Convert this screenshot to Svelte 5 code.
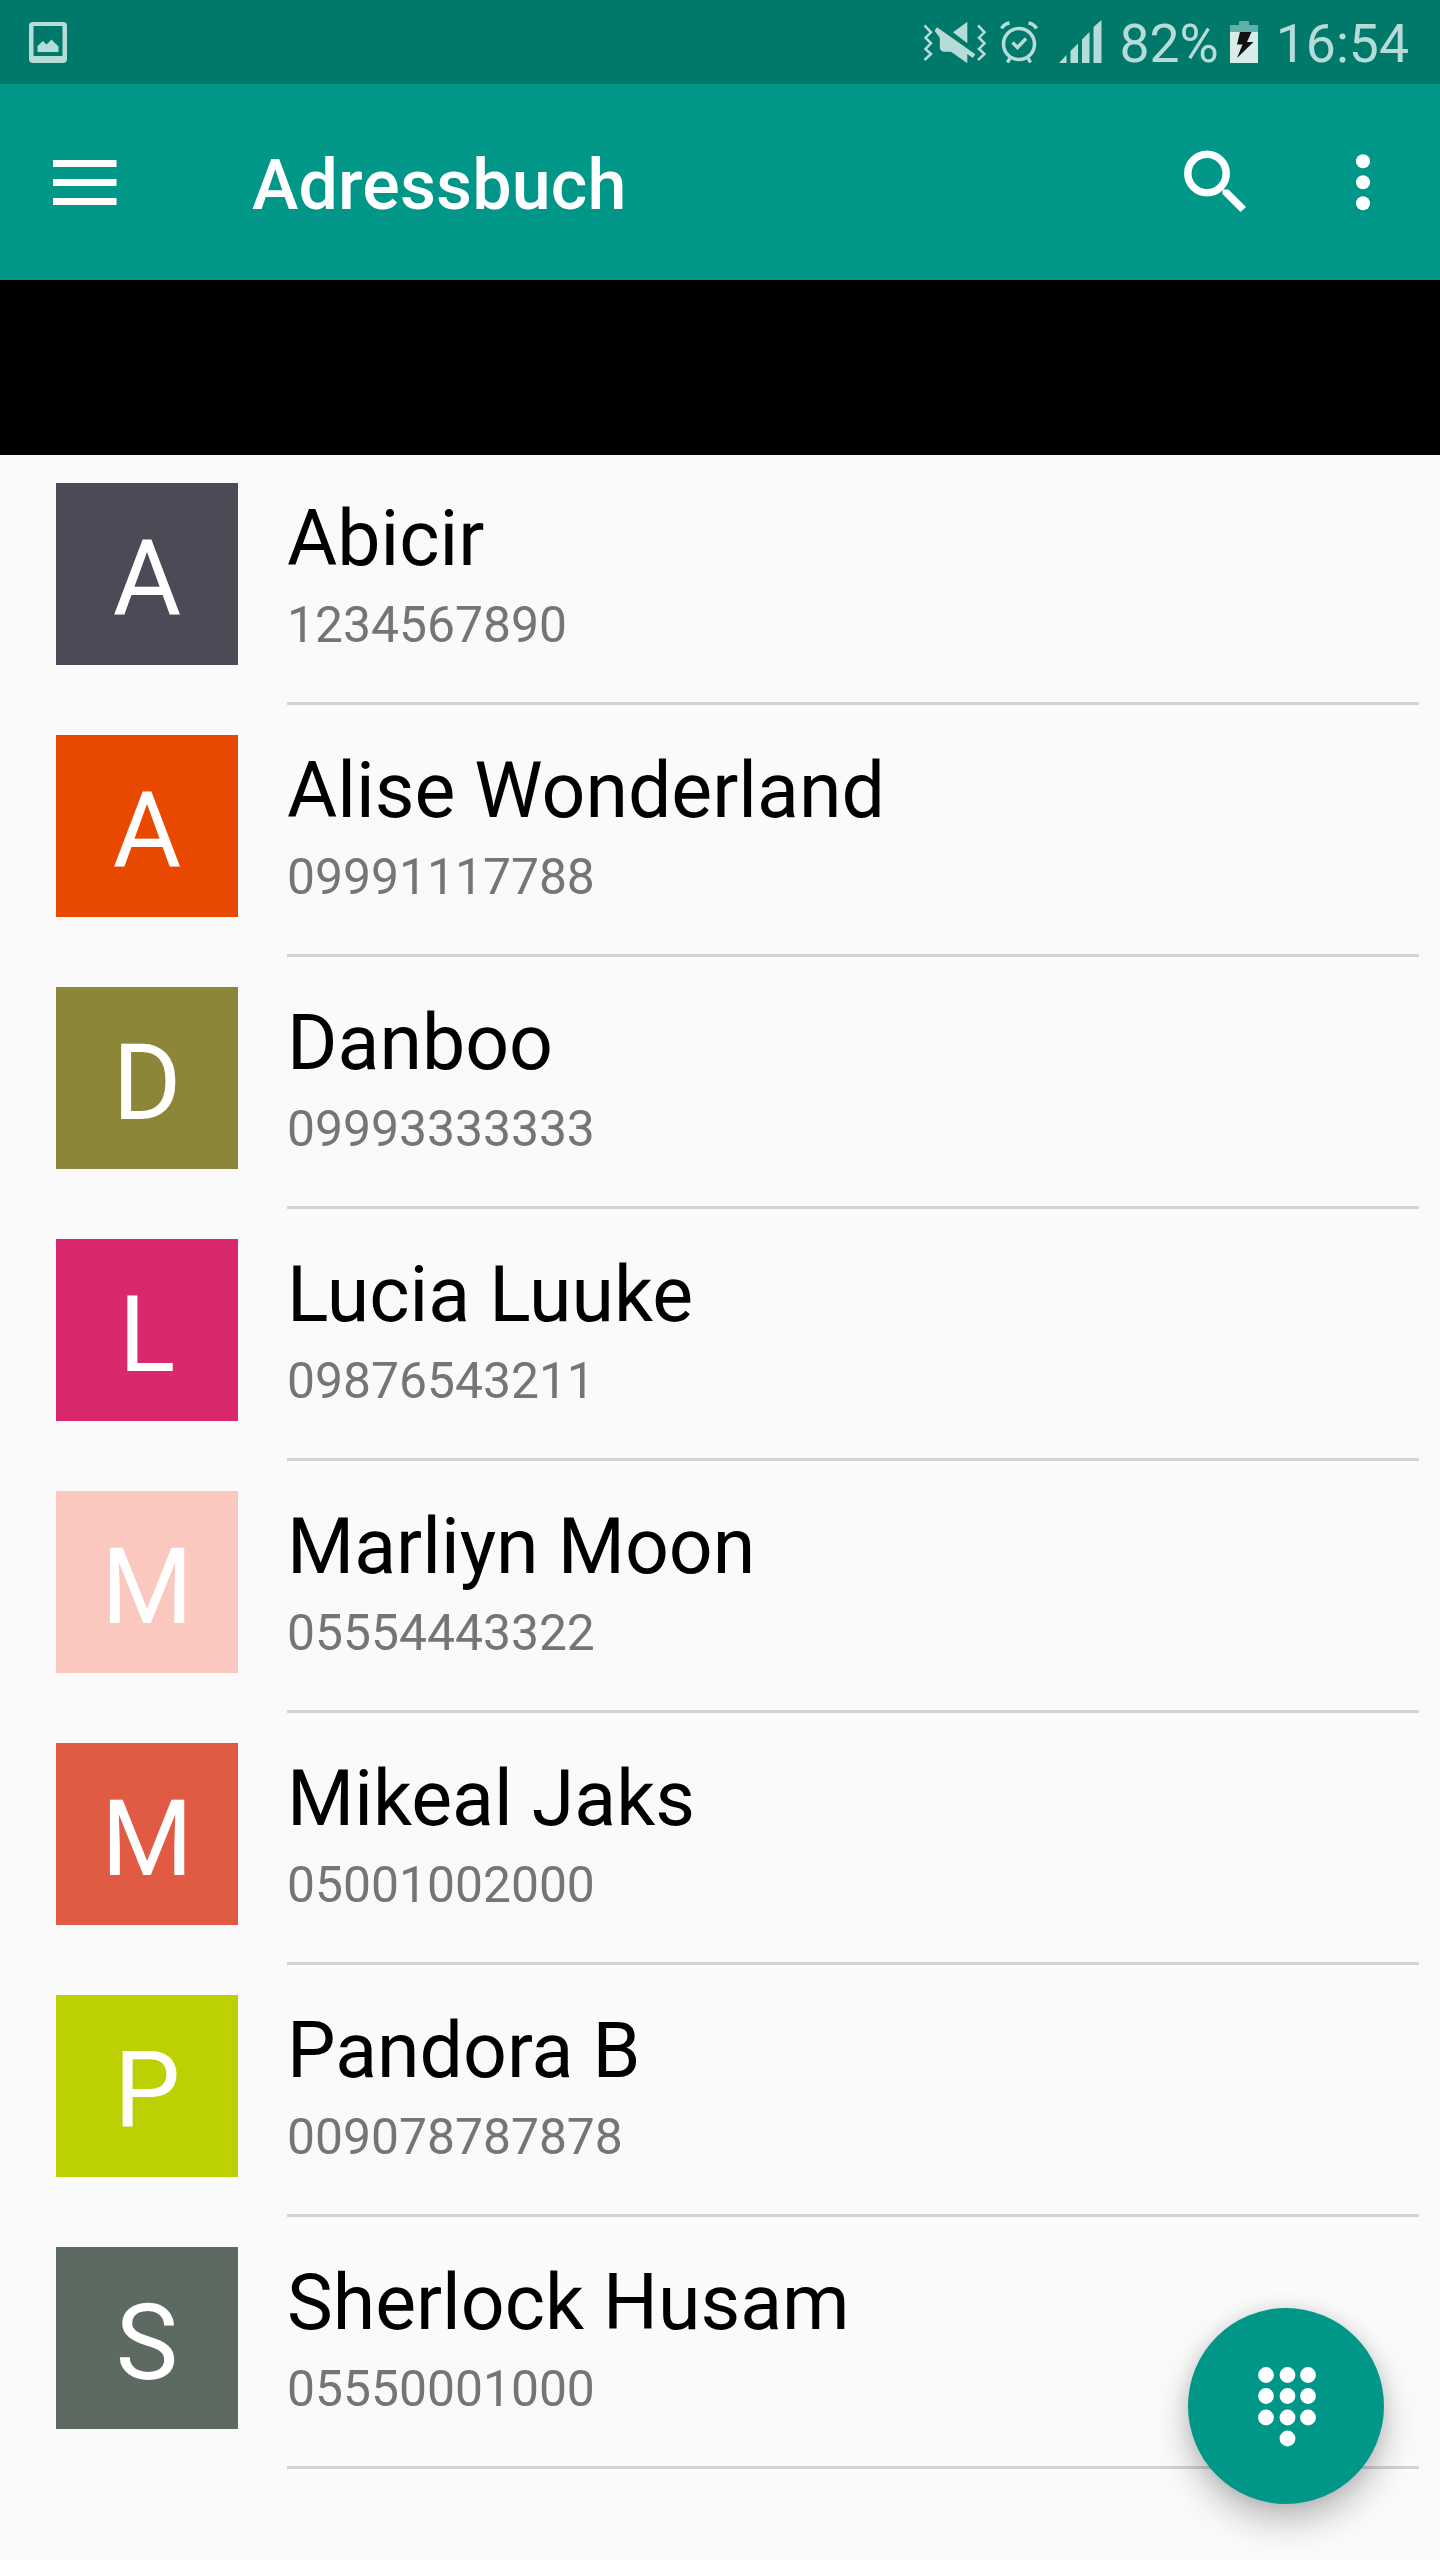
<script lang="ts">
	interface Contact {
		name: string;
		phone: string;
		color: string;
	}

	const contacts: Contact[] = [
		{ name: 'Abicir', phone: '1234567890', color: '#4c4a56' },
		{ name: 'Alise Wonderland', phone: '09991117788', color: '#e84800' },
		{ name: 'Danboo', phone: '09993333333', color: '#8c8738' },
		{ name: 'Lucia Luuke', phone: '09876543211', color: '#d9286e' },
		{ name: 'Marliyn Moon', phone: '05554443322', color: '#fac8be' },
		{ name: 'Mikeal Jaks', phone: '05001002000', color: '#e05a44' },
		{ name: 'Pandora B', phone: '009078787878', color: '#bcd004' },
		{ name: 'Sherlock Husam', phone: '05550001000', color: '#5c6a62' }
	];

	// dial pad dots: 3x3 grid plus the zero key
	const dots = [
		[8, 8], [29.5, 8], [50, 8],
		[8, 29], [29.5, 29], [50, 29],
		[8, 50.5], [29.5, 50.5], [50, 50.5],
		[29.5, 71.5]
	];
</script>

<div class="screen">
	<div class="status-bar">
		<svg class="shot" width="38" height="41" viewBox="0 0 38 41">
			<path
				fill="currentColor"
				fill-rule="evenodd"
				d="M4 0H34Q38 0 38 4V37Q38 41 34 41H4Q0 41 0 37V4Q0 0 4 0ZM4.500 4V34H33.500V4ZM8.500 30V24L14 19L17.500 22.500L22.500 17.500L29.500 24.500V30Z"
			/>
		</svg>
		<div class="status-right">
			<svg class="mute" width="64" height="44" viewBox="0 0 64 44" fill="currentColor">
				<path
					d="M1.500 5.300L8 12.300L2.500 17.700L8 23.300L2.500 29L8 34L1.500 40M55 5.300L61.500 12.300L56 17.700L61.500 23.300L56 29L61.500 34L55 40"
					fill="none"
					stroke="currentColor"
					stroke-width="2.500"
				/>
				<path d="M30 12.300L44.300 1.700V23.300Z" />
				<path d="M14 7.300L52.300 34.300L49.800 38L44.300 34V43.300L28 31.700H21Q16.800 31 16.800 27V17.700L11.600 10.700Z" />
			</svg>
			<svg
				class="alarm"
				width="38"
				height="44"
				viewBox="0 0 38 44"
				fill="none"
				stroke="currentColor"
				stroke-width="3.500"
			>
				<circle cx="19" cy="24" r="15.500" />
				<path d="M12.500 22.500L17.500 27.500L26 18.500M1.500 8.500Q4 4 9.500 3M36.500 8.500Q34 4 28.500 3M10 38L7.500 42.500M28 38L30.500 42.500" />
			</svg>
			<svg class="signal" width="43" height="44" viewBox="0 0 43 44" fill="currentColor">
				<path d="M0 43L7.500 35V43ZM11.500 31L19 23.500V43H11.500ZM23 19.500L30.500 12V43H23ZM34.500 7L42.500 0V43H34.500Z" />
			</svg>
			<span class="percent">82%</span>
			<svg class="battery" width="28" height="42" viewBox="0 0 28 42">
				<path fill="#5fb0a6" d="M9 0H19V4H28V11H0V4H9Z" />
				<path fill="#d8ecea" d="M0 11H28V42H0Z" />
				<path fill="#111" d="M10 11H21.500L17 21H23.500L7 37L12.500 23.500H7Z" />
			</svg>
			<span class="clock">16:54</span>
		</div>
	</div>

	<header class="toolbar">
		<button type="button" class="icon-btn menu" aria-label="Menu">
			<svg width="64" height="46" viewBox="0 0 64 46" fill="currentColor">
				<path d="M0 1H63.500V8H0ZM0 20H63.500V27H0ZM0 39H63.500V46H0Z" />
			</svg>
		</button>
		<h1>Adressbuch</h1>
		<button type="button" class="icon-btn search" aria-label="Search">
			<svg width="62" height="62" viewBox="0 0 62 62">
				<circle cx="23" cy="22.500" r="19.200" fill="none" stroke="currentColor" stroke-width="7.500" />
				<path fill="currentColor" d="M38.500 38.500H44.500L62 56L56.500 61L38.500 43Z" />
			</svg>
		</button>
		<button type="button" class="icon-btn more" aria-label="More">
			<svg width="14" height="57" viewBox="0 0 14 57" fill="currentColor">
				<circle cx="7" cy="7.300" r="7" />
				<circle cx="7" cy="28.300" r="7" />
				<circle cx="7" cy="49.300" r="7" />
			</svg>
		</button>
	</header>

	<div class="banner"></div>

	<ul class="contacts">
		{#each contacts as contact}
			<li class="contact">
				<div class="avatar" style="background-color: {contact.color}">{contact.name[0]}</div>
				<div class="details">
					<div class="name">{contact.name}</div>
					<div class="phone">{contact.phone}</div>
				</div>
			</li>
		{/each}
	</ul>

	<button type="button" class="fab" aria-label="Dial pad">
		<svg width="58" height="80" viewBox="0 0 58 80" fill="currentColor">
			{#each dots as [cx, cy]}
				<circle {cx} {cy} r="7.900" />
			{/each}
		</svg>
	</button>
</div>

<style>
	.screen {
		position: relative;
		width: 1440px;
		height: 2560px;
		overflow: hidden;
		background-color: #fafafa;
		font-family: Roboto, sans-serif;
	}

	svg {
		display: block;
		flex-shrink: 0;
		overflow: visible;
	}

	.status-bar {
		display: flex;
		justify-content: space-between;
		height: 84px;
		padding: 0 31px 0 29px;
		box-sizing: border-box;
		background-color: #00796b;
		color: #b5dcd8;
	}

	.shot {
		margin-top: 22px;
	}

	.status-right {
		display: flex;
		font-size: 53.5px;
		line-height: 88px;
	}

	.mute {
		margin: 20px 13px 0 0;
	}

	.alarm {
		margin: 20px 21px 0 0;
	}

	.signal {
		margin: 20px 17px 0 0;
	}

	.battery {
		margin: 21px 18px 0 11px;
	}

	.toolbar {
		display: flex;
		align-items: center;
		height: 196px;
		padding: 0 70px 0 53px;
		box-sizing: border-box;
		background-color: #009688;
		color: #fff;
	}

	.icon-btn {
		padding: 0;
		border: none;
		background: none;
		color: inherit;
	}

	h1 {
		flex: 1;
		margin: 6px 0 0 135px;
		font-size: 70px;
		font-weight: 500;
		line-height: 82px;
		letter-spacing: 0.12px;
	}

	.more {
		margin-left: 110px;
	}

	.banner {
		height: 175px;
		background-color: #000;
	}

	.contacts {
		margin: 0;
		padding: 0;
		list-style: none;
	}

	.contact {
		display: flex;
		gap: 49px;
		height: 252px;
		padding: 0 21px 2px 56px;
		box-sizing: border-box;
	}

	.avatar {
		width: 182px;
		height: 182px;
		margin-top: 28px;
		padding-top: 3px;
		box-sizing: border-box;
		color: #fff;
		font-size: 105px;
		line-height: 188px;
		text-align: center;
	}

	.details {
		flex: 1;
		padding-top: 39px;
		border-bottom: 3px solid #d3d3d3;
	}

	.name {
		color: #000;
		font-size: 77px;
		line-height: 90px;
	}

	.phone {
		color: #757575;
		font-size: 49.8px;
		line-height: 58px;
		margin-top: 12px;
	}

	.fab {
		position: absolute;
		right: 56px;
		bottom: 56px;
		display: flex;
		align-items: center;
		justify-content: center;
		width: 196px;
		height: 196px;
		padding: 1px 0 0 2px;
		border: none;
		border-radius: 50%;
		background-color: #009688;
		color: #fff;
		box-shadow: 0 18px 34px rgba(0, 0, 0, 0.24), 0 0 18px rgba(0, 0, 0, 0.1);
	}
</style>
